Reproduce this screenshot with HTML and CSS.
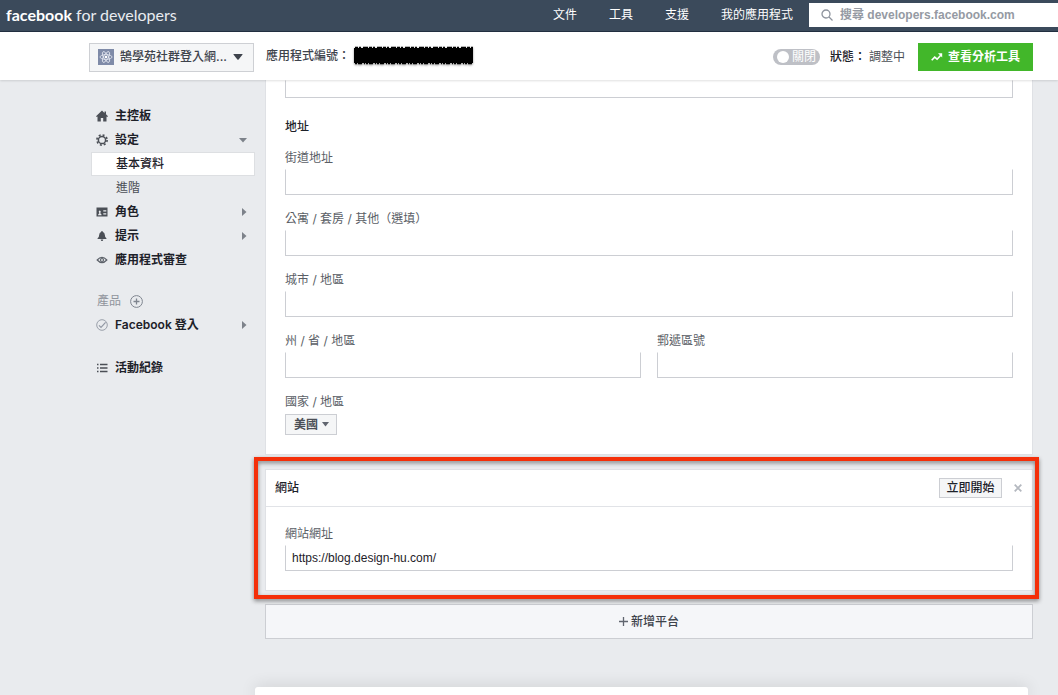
FILE: index.html
```html
<!DOCTYPE html>
<html lang="zh-Hant">
<head>
<meta charset="utf-8">
<title>facebook for developers</title>
<link rel="stylesheet" href="styles.css">
</head>
<body>
<header class="topbar">
  <a class="brand" href="#"><strong>facebook</strong> for developers</a>
  <nav class="topnav">
    <a href="#">文件</a>
    <a href="#">工具</a>
    <a href="#">支援</a>
    <a href="#">我的應用程式</a>
  </nav>
  <label class="search">
    <svg width="12" height="12" viewBox="0 0 12 12" fill="none" stroke="#8d939d" stroke-width="1.3"><circle cx="5" cy="5" r="4"/><path d="M8 8l3.5 3.5"/></svg>
    <input type="search" aria-label="搜尋" placeholder="搜尋 developers.facebook.com">
  </label>
</header>

<div class="appbar">
  <button class="app-picker" type="button">
    <svg width="16" height="16" viewBox="0 0 16 16" fill="none"><rect width="16" height="16" fill="#7f8ba8"/><g stroke="#e6eaf3" stroke-width=".8"><ellipse cx="8" cy="8" rx="6" ry="2.4"/><ellipse cx="8" cy="8" rx="6" ry="2.4" transform="rotate(60 8 8)"/><ellipse cx="8" cy="8" rx="6" ry="2.4" transform="rotate(120 8 8)"/></g><circle cx="8" cy="8" r="1.3" fill="#fff"/></svg>
    <span>鵠學苑社群登入網...</span>
    <svg width="10" height="6" viewBox="0 0 10 6"><path d="M1 0h8q1 0 .4.8L5.6 5.4q-.6.6-1.2 0L.6.8Q0 0 1 0z" fill="#3e434c"/></svg>
  </button>
  <div class="app-id">應用程式編號：
    <svg class="redaction" width="120" height="20" viewBox="0 0 120 20"><rect x="0" y="2" width="119" height="15"/><g stroke="#000" stroke-width="1.500"><path d="M1 1.500h118" stroke-dasharray="3 1 2 2 5 1"/><path d="M1 17.500h118" stroke-dasharray="2 1 4 2 1 1"/></g></svg>
  </div>
  <label class="toggle"><input type="checkbox"><span>關閉</span></label>
  <div class="status"><b>狀態：</b><span>調整中</span></div>
  <button class="analytics" type="button">
    <svg width="12" height="10" viewBox="0 0 12 10" fill="none" stroke="#fff" stroke-width="1.6"><path d="M.7 8.2l3-3 2.4 2L10 3"/><path d="M7 1.2h4.2v4.2z" fill="#fff" stroke="none"/></svg>
    查看分析工具
  </button>
</div>

<div class="layout">
  <nav class="sidebar">
    <a class="item" href="#"><svg width="12" height="12" viewBox="0 0 12 12"><path d="M6 .5L0 6.3l.8.8L1.500 6.500V11.500h3.300V8h2.400v3.500h3.300V6.500l.7.6.8-.8-2-2V1.500H8.500v1.400z" fill="#4b4f56"/></svg><span>主控板</span></a>
    <a class="item" href="#"><svg width="12" height="12" viewBox="0 0 12 12" fill="none" stroke="#4b4f56"><circle cx="6" cy="6" r="3.600" stroke-width="1.500"/><circle cx="6" cy="6" r="5.100" stroke-width="1.600" stroke-dasharray="2 2.005"/></svg><span>設定</span><svg class="arrow" width="8" height="5" viewBox="0 0 8 5"><path d="M0 0h8L4 4.500z" fill="#7d828a"/></svg></a>
    <a class="item sub current" href="#">基本資料</a>
    <a class="item sub" href="#">進階</a>
    <a class="item" href="#"><svg width="12" height="12" viewBox="0 0 12 12"><path d="M.5 1.500h11v9H.5z" fill="#4b4f56"/><path d="M2 9.300q.2-1.600 1.400-2Q2.500 6 2.900 5q.8-1.200 1.700 0 .4 1-.4 2.300 1.400.4 1.400 2zM7.300 4.200h3v1.300h-3zM7.300 7.200h3v1.300h-3z" fill="#e9ebee"/></svg><span>角色</span><svg class="arrow" width="5" height="8" viewBox="0 0 5 8"><path d="M0 0v8l4.500-4z" fill="#7d828a"/></svg></a>
    <a class="item" href="#"><svg width="12" height="12" viewBox="0 0 12 12"><path d="M6 1q.8 0 .9 1 1.800.6 1.900 2.700.1 2.500 1.400 3.300.3.300.3 1h-9q0-.7.3-1 1.300-.8 1.400-3.300Q3.300 2.600 5.100 2 5.200 1 6 1zM4.700 9.500h2.600Q7.200 11 6 11T4.700 9.500z" fill="#4b4f56"/></svg><span>提示</span><svg class="arrow" width="5" height="8" viewBox="0 0 5 8"><path d="M0 0v8l4.500-4z" fill="#7d828a"/></svg></a>
    <a class="item" href="#"><svg width="12" height="12" viewBox="0 0 12 12" fill="none" stroke="#5d626a" stroke-width="1.200"><path d="M1.200 6Q6 .8 10.800 6 6 11.200 1.200 6z"/><circle cx="6" cy="6" r="1.500"/></svg><span>應用程式審查</span></a>
    <div class="products">產品
      <button class="add" type="button" aria-label="新增產品"><svg width="13" height="13" viewBox="0 0 13 13" fill="none" stroke="#7f858f"><circle cx="6.500" cy="6.500" r="5.900"/><path d="M6.500 3.500v6M3.500 6.500h6" stroke-width="1.300"/></svg></button>
    </div>
    <a class="item" href="#"><svg width="12" height="12" viewBox="0 0 12 12" fill="none" stroke="#9197a3"><circle cx="6" cy="6" r="5.300" stroke-width=".9"/><path d="M3 6.300l2 2 4.600-5" stroke-width="1.200"/></svg><span>Facebook 登入</span><svg class="arrow" width="5" height="8" viewBox="0 0 5 8"><path d="M0 0v8l4.500-4z" fill="#7d828a"/></svg></a>
    <a class="item log" href="#"><svg width="12" height="12" viewBox="0 0 12 12" fill="none" stroke="#4b4f56" stroke-width="1.300"><path d="M1 2.500h1.500M4 2.500h7.500M1 6h1.500M4 6h7.500M1 9.500h1.500M4 9.500h7.500"/></svg><span>活動紀錄</span></a>
  </nav>

  <main class="content">
    <section class="card address">
      <input class="text" type="text" aria-label="聯絡資料">
      <h2>地址</h2>
      <div class="field"><label for="street">街道地址</label><input class="text" id="street" type="text"></div>
      <div class="field"><label for="unit">公寓 / 套房 / 其他（選填）</label><input class="text" id="unit" type="text"></div>
      <div class="field"><label for="city">城市 / 地區</label><input class="text" id="city" type="text"></div>
      <div class="pair">
        <div class="field"><label for="state">州 / 省 / 地區</label><input class="text" id="state" type="text"></div>
        <div class="field"><label for="zip">郵遞區號</label><input class="text" id="zip" type="text"></div>
      </div>
      <div class="field country"><label for="country">國家 / 地區</label>
        <div class="select"><select id="country"><option>美國</option></select><svg width="7" height="5" viewBox="0 0 7 5"><path d="M0 0h7L3.500 4.500z" fill="#60656f"/></svg></div>
      </div>
    </section>

    <section class="card website">
      <div class="card-head">
        <h2>網站</h2>
        <button class="quick" type="button">立即開始</button>
        <button class="close" type="button" aria-label="關閉"><svg width="8" height="8" viewBox="0 0 8 8" stroke="#b4b8bf" stroke-width="1.800"><path d="M.7.7l6.600 6.600M7.300.7L.7 7.300"/></svg></button>
      </div>
      <div class="card-body field"><label for="url">網站網址</label><input class="text" id="url" type="text" value="https://blog.design-hu.com/"></div>
      <div class="highlight"></div>
    </section>

    <button class="add-platform" type="button"><svg width="9" height="9" viewBox="0 0 9 9" stroke="#60656f" stroke-width="1.300"><path d="M4.500 0v9M0 4.500h9"/></svg>新增平台</button>
  </main>
</div>
<div class="bottom-panel"></div>
</body>
</html>
```
FILE: styles.css
```css
* { box-sizing: border-box; }
body {
  margin: 0;
  min-height: 100vh;
  display: flex;
  flex-direction: column;
  background: #e9ebee;
  color: #1d2129;
  font: 12px/16px Inter, "Noto Sans CJK TC", sans-serif;
}
a { color: inherit; text-decoration: none; }
button, input, select { font: inherit; color: inherit; margin: 0; }
button { padding: 0; cursor: pointer; white-space: nowrap; }
svg { display: block; flex: none; }
h2 { margin: 0; font-size: 12px; line-height: 16px; font-weight: 500; }

.topbar {
  display: flex;
  align-items: center;
  height: 32px;
  padding: 0 0 2px 6px;
  background: #3b4a5b;
  border-bottom: 1px solid #222f40;
  color: #fff;
}
.brand {
  font: 16px/20px Lato, "Noto Sans", sans-serif;
  color: #e9ecf0;
  white-space: nowrap;
}
.brand strong { color: #fff; font-weight: 700; }
.topnav {
  display: flex;
  gap: 32px;
  margin: 0 16px 0 auto;
  white-space: nowrap;
}
.search {
  display: flex;
  align-items: center;
  gap: 7px;
  width: 249px;
  height: 24px;
  padding-left: 12px;
  background: #fff;
}
.search input {
  flex: 1;
  min-width: 0;
  padding: 0;
  border: 0;
  outline: 0;
  background: none;
  font-family: "Liberation Sans", "Noto Sans CJK TC", sans-serif;
  font-weight: 600;
}
.search input::placeholder { color: #959aa3; opacity: 1; }

.appbar {
  position: relative;
  display: flex;
  align-items: center;
  height: 48px;
  padding: 2px 25px 0 89px;
  background: #fff;
  box-shadow: 0 1px 2px rgba(0, 0, 0, .12);
  white-space: nowrap;
}
.app-picker {
  display: flex;
  align-items: center;
  gap: 6px;
  width: 165px;
  height: 29px;
  padding: 0 10px 0 8px;
  border: 1px solid #ced0d4;
  background: #f5f6f7;
  color: #3e434c;
  font-weight: 500;
}
.app-picker span { flex: 1; text-align: left; }
.app-id {
  display: flex;
  align-items: center;
  gap: 4px;
  margin-left: 12px;
  padding-bottom: 2px;
  font-weight: 500;
  color: #3e434c;
}
.redaction { filter: drop-shadow(0 1px 1px rgba(0, 0, 0, .4)); }
.toggle {
  display: flex;
  align-items: center;
  gap: 3px;
  height: 16px;
  margin-left: auto;
  padding: 0 4px;
  border-radius: 8px;
  background: #bec0c6;
  color: #fff;
}
.toggle input {
  appearance: none;
  width: 12px;
  height: 12px;
  border-radius: 50%;
  background: #fff;
}
.status { display: flex; gap: 3px; margin: 0 13px 0 10px; color: #4b4f56; }
.status b { font-weight: 500; color: #1d2129; }
.analytics {
  display: flex;
  align-items: center;
  justify-content: center;
  gap: 5px;
  width: 115px;
  height: 28px;
  border: 0;
  background: #42b72a;
  color: #fff;
  font-weight: 700;
}

.layout {
  display: flex;
  align-items: flex-start;
  gap: 10px;
  padding: 0 25px 48px 91px;
}
.sidebar { width: 164px; padding-top: 24px; }
.item {
  display: flex;
  align-items: center;
  gap: 7px;
  height: 24px;
  padding: 0 8px 0 5px;
  font-weight: 600;
}
.item .arrow { margin-left: auto; }
.item.sub { padding-left: 24px; border: 1px solid transparent; font-weight: 400; color: #4b4f56; }
.item.sub.current { border-color: #dddfe2; background: #fff; font-weight: 500; color: #1d2129; }
.products {
  display: flex;
  align-items: center;
  gap: 9px;
  height: 24px;
  margin-top: 17px;
  padding-left: 6px;
  color: #90949c;
}
.add, .close { border: 0; background: none; }
.item.log { margin-top: 19px; }

.content { flex: 1; min-width: 0; }
.card { background: #fff; border: 1px solid #dfe1e5; }
.address {
  display: flex;
  flex-direction: column;
  gap: 16px;
  padding: 0 19px 19px;
  border-top: 0;
}
.address h2 { margin: 5px 0 -1px; }
.address > .text { height: 18px; }
.text {
  display: block;
  width: 100%;
  height: 26px;
  padding: 0 6px;
  border: 1px solid #ccced3;
  border-top-color: transparent;
  border-radius: 0;
  background: #fff;
  outline: 0;
  font-family: "Liberation Sans", Arial, sans-serif;
}
.field { display: flex; flex-direction: column; gap: 3px; }
.field.country { gap: 4px; }
.field label { color: #5a5e66; }
.pair { display: grid; grid-template-columns: 1fr 1fr; gap: 16px; }
.select { position: relative; align-self: flex-start; width: 52px; }
.select select {
  appearance: none;
  display: block;
  width: 100%;
  height: 21px;
  padding: 0 8px;
  border: 1px solid #ccced3;
  border-radius: 0;
  background: #f5f6f7;
  color: #4b4f56;
  font-weight: 600;
}
.select svg { position: absolute; right: 8px; top: 8px; pointer-events: none; }

.website { position: relative; margin-top: 14px; }
.card-head {
  display: flex;
  align-items: center;
  height: 37px;
  padding: 0 10px 0 9px;
  border-bottom: 1px solid #e1e3e7;
}
.quick {
  width: 63px;
  height: 20px;
  margin: 0 12px 0 auto;
  border: 1px solid #ccced3;
  background: #f5f6f7;
  font-weight: 500;
}
.card-body { padding: 19px; }
.highlight {
  position: absolute;
  inset: -13px -7px -9px -12px;
  border: 4px solid #f42f09;
  filter: drop-shadow(0 2px 2px rgba(0, 0, 0, .45));
  pointer-events: none;
}
.add-platform {
  display: flex;
  align-items: center;
  justify-content: center;
  gap: 3px;
  width: 100%;
  height: 35px;
  margin-top: 13px;
  border: 1px solid #ccced3;
  background: #f5f6f9;
  color: #3e434c;
  font-weight: 500;
}
.bottom-panel {
  flex: 1;
  min-height: 8px;
  margin: 0 30px 0 255px;
  border-radius: 3px 3px 0 0;
  background: #fff;
  box-shadow: 0 0 16px rgba(0, 0, 0, .16);
}
```
